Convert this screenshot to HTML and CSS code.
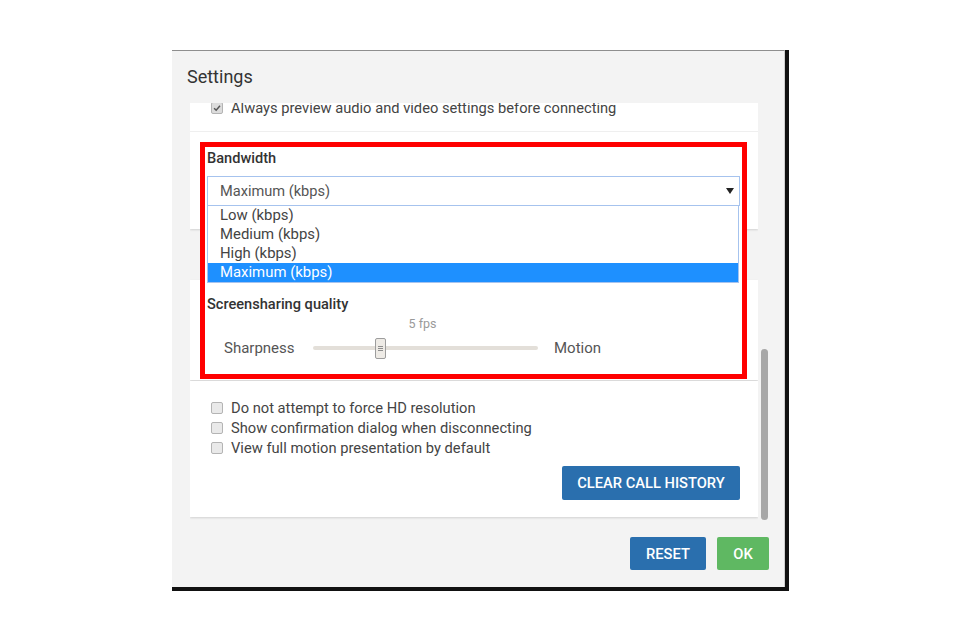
FILE: index.html
```html
<!DOCTYPE html>
<html lang="en">
<head>
<meta charset="utf-8">
<title>Settings</title>
<link rel="stylesheet" href="styles.css">
</head>
<body>
<div class="page">
  <div class="frame">
    <div class="dialog">
      <div class="dialog-header">Settings</div>
      <div class="dialog-body">
        <div class="cards">
          <div class="card card-first">
            <div class="check-row"><span class="cb checked"><svg viewBox="0 0 12 12" width="10" height="10"><path d="M2.5 6.2 L5 8.6 L9.6 3.4" fill="none" stroke="#555" stroke-width="1.8"/></svg></span>Always preview audio and video settings before connecting</div>
            <div class="divider"></div>
            <div class="card-space"></div>
          </div>
          <div class="card card-second"></div>
          <div class="card card-third">
            <div class="check-row"><span class="cb"></span>Do not attempt to force HD resolution</div>
            <div class="check-row"><span class="cb"></span>Show confirmation dialog when disconnecting</div>
            <div class="check-row"><span class="cb"></span>View full motion presentation by default</div>
            <div class="card-actions"><button class="btn btn-blue btn-wide">CLEAR CALL HISTORY</button></div>
          </div>
        </div>
        <div class="scroll-track"><div class="scroll-thumb"></div></div>
      </div>
      <div class="dialog-footer">
        <button class="btn btn-blue btn-reset">RESET</button>
        <button class="btn btn-green btn-ok">OK</button>
      </div>

      <div class="highlight">
        <div class="field-label">Bandwidth</div>
        <div class="select">
          <span class="select-value">Maximum (kbps)</span>
          <svg class="select-arrow" viewBox="0 0 8 6" width="8" height="6"><polygon points="0,0 8,0 4,6" fill="#222"/></svg>
        </div>
        <ul class="options">
          <li>Low (kbps)</li>
          <li>Medium (kbps)</li>
          <li>High (kbps)</li>
          <li class="selected">Maximum (kbps)</li>
        </ul>
        <div class="field-label field-label-second">Screensharing quality</div>
        <div class="fps-row"><span class="fps-spacer"></span><span class="fps">5 fps</span></div>
        <div class="slider-row">
          <span class="slider-label">Sharpness</span>
          <div class="track"><span class="handle"><i></i><i></i><i></i></span></div>
          <span class="slider-end">Motion</span>
        </div>
      </div>
    </div>
  </div>
</div>
</body>
</html>
```
FILE: styles.css
```css
* { box-sizing: border-box; }
html, body { margin: 0; padding: 0; background: #fff; }
body {
  font-family: Roboto, "Liberation Sans", Arial, sans-serif;
  font-size: 14.7px;
  color: #444;
}
.page { padding: 50px 0 0 172px; }
.frame {
  display: inline-block;
  background: #111;
  padding: 0 4px 4px 0;
}
.dialog {
  position: relative;
  width: 613px;
  height: 537px;
  background: #f3f3f3;
  border-top: 1px solid #8e8e8e;
  border-right: 1px solid #cfcfcf;
  display: flex;
  flex-direction: column;
}
.dialog-header {
  height: 52px;
  line-height: 52px;
  padding-left: 15px;
  font-size: 18px;
  color: #333;
}
.dialog-body {
  display: flex;
  height: 417px;
  margin-left: 18px;
  overflow: hidden;
}
.cards {
  width: 568px;
  overflow: hidden;
  padding-bottom: 3px;
}
.card {
  background: #fff;
  box-shadow: 0 1px 2px rgba(0,0,0,0.14);
}
.card-first { margin-top: -9px; padding-top: 4px; }
.card-first .check-row { padding-left: 21px; }
.divider { margin-top: 13px; height: 1px; background: #efefef; }
.card-space { height: 97px; }
.card-second { margin-top: 51px; height: 100px; }
.card-third { margin-top: 1px; padding: 17px 18px 17px 21px; }
.check-row {
  display: flex;
  align-items: center;
  height: 20px;
  color: #444;
  white-space: nowrap;
}
.cb {
  width: 12px;
  height: 12px;
  margin-right: 8px;
  border: 1px solid #b4b4b4;
  border-radius: 2px;
  background: #e9e9e9;
  display: flex;
  align-items: center;
  justify-content: center;
}
.cb.checked { background: #dcdcdc; }
.card-actions {
  display: flex;
  justify-content: flex-end;
  margin-top: 8px;
}
.btn {
  border: 0;
  border-radius: 2px;
  color: #fff;
  font-family: Roboto, "Liberation Sans", Arial, sans-serif;
  font-size: 14.7px;
  font-weight: 500;
  padding: 0;
  cursor: pointer;
}
.btn-blue { background: #2a6fae; }
.btn-green { background: #5fb862; }
.btn-wide { width: 178px; height: 34px; }
.scroll-track { width: 12px; padding-left: 3px; }
.scroll-thumb {
  width: 7px;
  height: 171px;
  margin-top: 246px;
  background: #a7a7a7;
  border-radius: 4px;
}
.dialog-footer {
  display: flex;
  justify-content: flex-end;
  gap: 11px;
  margin-top: 17px;
  padding-right: 15px;
}
.btn-reset { width: 76px; height: 33px; }
.btn-ok { width: 52px; height: 33px; }

/* red highlight annotation overlay */
.highlight {
  position: absolute;
  left: 28px;
  top: 91px;
  width: 547px;
  height: 237px;
  border: 5px solid #f00;
  background: #fff;
  padding: 1px 2px 0 2px;
}
.field-label {
  line-height: 20px;
  color: #333;
  font-weight: 500;
  font-size: 14.6px;
}
.field-label-second { margin-top: 11px; }
.select {
  margin-top: 8px;
  height: 30px;
  border: 1px solid #a6c3ee;
  display: flex;
  align-items: center;
  justify-content: space-between;
  padding: 0 5px 0 12px;
  font-size: 14.6px;
  color: #555;
}
.select-arrow { display: block; }
.options {
  list-style: none;
  margin: 0 1px 0 0;
  padding: 0;
  border: 1px solid #a6c3ee;
  border-top: 0;
}
.options li {
  height: 19px;
  line-height: 19px;
  padding-left: 12px;
  font-size: 14.9px;
  color: #444;
}
.options li.selected { background: #1e90ff; color: #fff; }
.fps-row { display: flex; margin-top: 2px; height: 16px; }
.fps-spacer { width: 103px; }
.fps {
  width: 225px;
  text-align: center;
  font-size: 12.5px;
  line-height: 16px;
  color: #9a9a9a;
}
.slider-row {
  display: flex;
  align-items: center;
  height: 22px;
  margin-top: 5px;
  padding-left: 17px;
  font-size: 15px;
}
.slider-label { width: 89px; color: #555; }
.slider-end { margin-left: 16px; color: #555; }
.track {
  position: relative;
  width: 225px;
  height: 4px;
  background: #e3dfd9;
  border-radius: 2px;
}
.handle {
  position: absolute;
  left: 62px;
  top: -8px;
  width: 11px;
  height: 21px;
  background: #eeebe6;
  border: 1px solid #9d9d9d;
  border-radius: 2px;
  display: flex;
  flex-direction: column;
  align-items: center;
  justify-content: center;
  gap: 1px;
}
.handle i {
  display: block;
  width: 5px;
  height: 1px;
  background: #8d8d8d;
}
```
